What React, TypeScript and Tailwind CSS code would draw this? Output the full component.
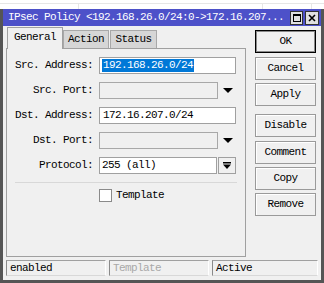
import React from "react";

const mono = "font-['Liberation_Mono','DejaVu_Sans_Mono',monospace] text-[11px] tracking-[-0.6px]";

const buttons = [
  { label: "OK", mt: "mt-0", primary: true },
  { label: "Cancel", mt: "mt-[4px]" },
  { label: "Apply", mt: "mt-[3px]" },
  { label: "Disable", mt: "mt-[8px]" },
  { label: "Comment", mt: "mt-[4px]" },
  { label: "Copy", mt: "mt-[3px]" },
  { label: "Remove", mt: "mt-[3px]" },
];

function DropArrow() {
  return (
    <svg width="10" height="5" viewBox="0 0 10 5" className="ml-[5px]">
      <polygon points="0,0 10,0 5,5" fill="#000" />
    </svg>
  );
}

function Row({ label, children }: { label: string; children: React.ReactNode }) {
  return (
    <div className="flex h-[17px] items-center">
      <div className="w-[86px] text-right leading-none">{label}</div>
      <div className="ml-[6px] flex h-full items-center">{children}</div>
    </div>
  );
}

export default function App() {
  return (
    <div className={`h-[283px] w-[324px] overflow-hidden bg-white text-black ${mono}`}>
      {/* desktop strip above the window */}
      <div className="flex h-[9px] border-t border-transparent">
        <div className="mt-[2px] flex h-[7px] w-full border-t border-[#e6e6e6]">
          <div className="w-[79px] border-r border-[#e6e6e6]" />
          <div className="w-[184px] border-r border-[#e6e6e6]" />
          <div className="w-[49px] border-r border-[#e6e6e6]" />
        </div>
      </div>

      {/* window */}
      <div className="flex h-[274px] flex-col border-x-[3px] border-b-[3px] border-[#555555]">
        {/* title bar */}
        <div className="flex h-[17px] items-center bg-[#4d51c9] pl-[5px] pr-[2px] text-white">
          <span className="flex-1 whitespace-nowrap leading-none">
            IPsec Policy &lt;192.168.26.0/24:0-&gt;172.16.207...
          </span>
          <div className="flex gap-[2px]">
            <div className="flex h-[14px] w-[13px] items-center justify-center border border-[#333] bg-[#e0e0e0]">
              <div className="h-[8px] w-[8px] border border-black border-t-2" />
            </div>
            <div className="flex h-[14px] w-[14px] items-center justify-center border border-[#333] bg-[#e0e0e0]">
              <svg width="8" height="8" viewBox="0 0 8 8">
                <path d="M1 1 L7 7 M7 1 L1 7" stroke="#000" strokeWidth="1.6" />
              </svg>
            </div>
          </div>
        </div>

        {/* body */}
        <div className="flex flex-1 flex-col bg-[#f0f0f0]">
          <div className="flex">
            {/* tabs + panel */}
            <div className="ml-[3px] flex w-[240px] flex-col pt-[1px]">
              <div className="flex h-[21px] items-end pl-[1px]">
                <div className="relative z-10 mb-[-1px] flex h-[22px] w-[56px] items-center justify-center border border-b-0 border-[#a0a0a0] bg-[#f0f0f0] pb-[2px]">
                  General
                </div>
                <div className="flex h-[18px] w-[46px] items-center justify-center border border-b-0 border-[#a8a8a8] bg-[#d6d6d6]">
                  Action
                </div>
                <div className="ml-[1px] flex h-[18px] w-[47px] items-center justify-center border border-b-0 border-[#a8a8a8] bg-[#d6d6d6]">
                  Status
                </div>
              </div>
              <div className="flex h-[209px] flex-col border border-[#a0a0a0] pt-[8px] pl-[0px]">
                <div className="flex flex-col gap-[8px]">
                  <Row label="Src. Address:">
                    <div className="flex h-[17px] w-[137px] items-center border border-[#a0a0a0] bg-white pl-[2px]">
                      <span className="bg-[#0078d7] px-[1px] leading-[13px] text-white">192.168.26.0/24</span>
                    </div>
                  </Row>
                  <Row label="Src. Port:">
                    <div className="h-[17px] w-[119px] border border-[#a8a8a8] bg-[#f0f0f0]" />
                    <DropArrow />
                  </Row>
                  <Row label="Dst. Address:">
                    <div className="flex h-[17px] w-[137px] items-center border border-[#a0a0a0] bg-white pl-[3px]">
                      172.16.207.0/24
                    </div>
                  </Row>
                  <Row label="Dst. Port:">
                    <div className="h-[17px] w-[119px] border border-[#a8a8a8] bg-[#f0f0f0]" />
                    <DropArrow />
                  </Row>
                  <Row label="Protocol:">
                    <div className="flex h-[17px] w-[118px] items-center border border-[#a0a0a0] bg-white pl-[2px]">
                      255 (all)
                    </div>
                    <div className="ml-[1px] flex h-[17px] w-[18px] items-center justify-center border border-[#a0a0a0] bg-[#f0f0f0]">
                      <svg width="8" height="7" viewBox="0 0 8 7">
                        <rect x="0" y="0" width="8" height="1.5" fill="#000" />
                        <polygon points="0,2.5 8,2.5 4,7" fill="#000" />
                      </svg>
                    </div>
                  </Row>
                </div>
                <div className="ml-[8px] mt-[8px] h-px w-[222px] bg-[#d8d8d8]" />
                <div className="ml-[92px] mt-[6px] flex items-center">
                  <div className="h-[13px] w-[13px] border border-[#8a8a8a] bg-white" />
                  <span className="ml-[4px] leading-none">Template</span>
                </div>
              </div>
            </div>

            {/* right buttons */}
            <div className="ml-[9px] flex flex-col pt-[4px]">
              {buttons.map((b) => (
                <div
                  key={b.label}
                  className={`${b.mt} flex h-[23px] w-[61px] items-center justify-center bg-[#f0f0f0] ${
                    b.primary
                      ? "border border-black shadow-[inset_0_0_0_1px_#8a8a8a]"
                      : "border border-[#9a9a9a] shadow-[inset_1px_1px_0_#ffffff]"
                  }`}
                >
                  {b.label}
                </div>
              ))}
            </div>
          </div>

          {/* status bar */}
          <div className="mt-[3px] flex h-[16px] gap-[3px] pl-[3px]">
            <div className="flex w-[100px] items-center border-l border-t border-b border-r border-l-[#8a8a8a] border-t-[#a0a0a0] border-r-[#ffffff] border-b-[#d8d8d8] pl-[3px]">
              enabled
            </div>
            <div className="flex w-[100px] items-center border border-l-[#8a8a8a] border-t-[#a0a0a0] border-r-[#ffffff] border-b-[#d8d8d8] pl-[3px] text-[#a8a8a8]">
              Template
            </div>
            <div className="flex w-[106px] items-center border border-l-[#8a8a8a] border-t-[#a0a0a0] border-r-[#ffffff] border-b-[#d8d8d8] pl-[3px]">
              Active
            </div>
          </div>
        </div>
      </div>
    </div>
  );
}
